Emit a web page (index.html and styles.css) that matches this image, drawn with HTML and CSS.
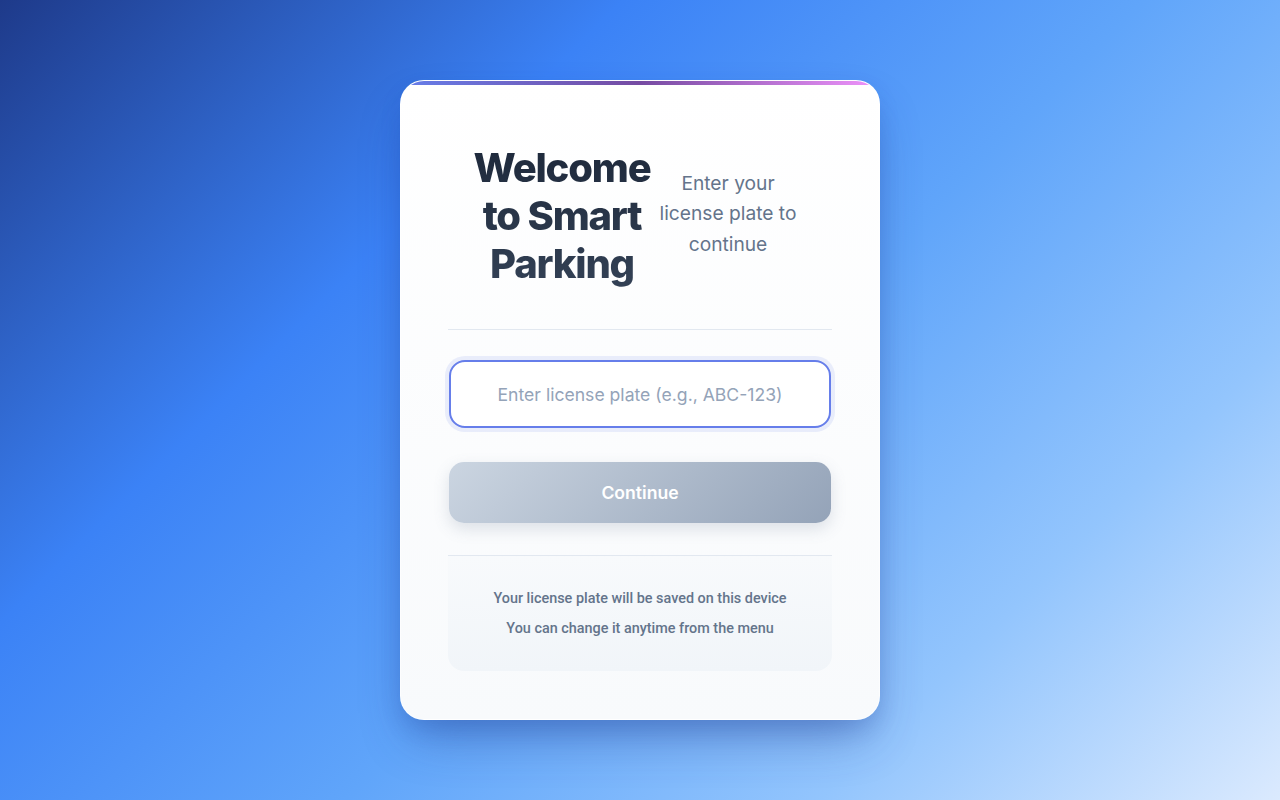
FILE: index.html
```html
<!DOCTYPE html>
<html lang="en">
<head>
<meta charset="utf-8">
<title>Smart Parking</title>
<link rel="stylesheet" href="styles.css">
</head>
<body>
<main class="page">
  <section class="card">
    <div class="card-bar"></div>
    <header class="header">
      <h1 class="title">Welcome to Smart Parking</h1>
      <p class="subtitle">Enter your license plate to continue</p>
    </header>
    <form class="form">
      <input class="plate-input" type="text" placeholder="Enter license plate (e.g., ABC-123)">
      <button class="continue-btn" type="button">Continue</button>
    </form>
    <div class="info">
      <p class="info-line">Your license plate will be saved on this device</p>
      <p class="info-line">You can change it anytime from the menu</p>
    </div>
  </section>
</main>
</body>
</html>
```

FILE: styles.css
```css
* { box-sizing: border-box; }
html, body { margin: 0; padding: 0; height: 100%; }
body {
  font-family: Inter, "Noto Sans", sans-serif;
  background: linear-gradient(135deg, #1e3a8a 0%, #3b82f6 30%, #60a5fa 55%, #93c5fd 78%, #dbeafe 100%);
  min-height: 800px;
}
.page {
  min-height: 800px;
  display: flex;
  align-items: center;
  justify-content: center;
}
.card {
  position: relative;
  width: 480px;
  height: 640px;
  border-radius: 24px;
  background: linear-gradient(180deg, #ffffff 0%, #f8fafc 100%);
  border: 1px solid rgba(255, 255, 255, 0.6);
  box-shadow: 0 25px 50px -12px rgba(30, 58, 138, 0.45), 0 10px 20px rgba(30, 64, 175, 0.15);
  padding: 47px 47px;
  overflow: hidden;
}
.card-bar {
  position: absolute;
  top: 0;
  left: 0;
  right: 0;
  height: 4px;
  background: linear-gradient(90deg, #667eea 0%, #764ba2 50%, #f093fb 100%);
}
.header {
  display: flex;
  align-items: center;
  justify-content: center;
  padding: 16px 8px 41px 0;
  margin-bottom: 24px;
  border-bottom: 1px solid #e2e8f0;
}
.title {
  width: 184px;
  flex: none;
  margin: 0;
  font-size: 40px;
  line-height: 48px;
  font-weight: 800;
  letter-spacing: -0.03em;
  text-align: center;
  color: #1e293b;
  background: linear-gradient(180deg, #1e293b 0%, #334155 100%);
  -webkit-background-clip: text;
  background-clip: text;
  -webkit-text-fill-color: transparent;
}
.subtitle {
  width: 148px;
  flex: none;
  margin: 0 0 5px;
  font-size: 19.2px;
  line-height: 30.5px;
  color: #64748b;
  text-align: center;
}
.form {
  display: flex;
  flex-direction: column;
  gap: 34px;
  margin-top: 30px;
  padding: 0 1px;
}
.plate-input {
  width: 100%;
  height: 68px;
  border: 2px solid #667eea;
  border-radius: 16px;
  background: #ffffff;
  box-shadow: 0 0 0 4px rgba(102, 126, 234, 0.12);
  font-family: Inter, "Noto Sans", sans-serif;
  font-size: 17.6px;
  text-align: center;
  color: #1e293b;
  outline: none;
}
.plate-input::placeholder { color: #94a3b8; }
.continue-btn {
  width: 100%;
  height: 61px;
  border: none;
  border-radius: 15px;
  background: linear-gradient(135deg, #cbd5e1 0%, #94a3b8 100%);
  box-shadow: 0 6px 16px rgba(100, 116, 139, 0.2);
  color: #ffffff;
  font-family: Inter, "Noto Sans", sans-serif;
  font-size: 17.6px;
  font-weight: 600;
}
.info {
  margin-top: 32px;
  border-top: 1px solid #e2e8f0;
  border-radius: 0 0 16px 16px;
  background: linear-gradient(180deg, #f8fafc 0%, #f1f5f9 100%);
  padding: 33px 16px 32px;
  text-align: center;
}
.info-line {
  margin: 0;
  font-family: Roboto, "Liberation Sans", sans-serif;
  font-size: 14.4px;
  line-height: 20px;
  font-weight: 500;
  color: #64748b;
}
.info-line + .info-line { margin-top: 10px; }
```
